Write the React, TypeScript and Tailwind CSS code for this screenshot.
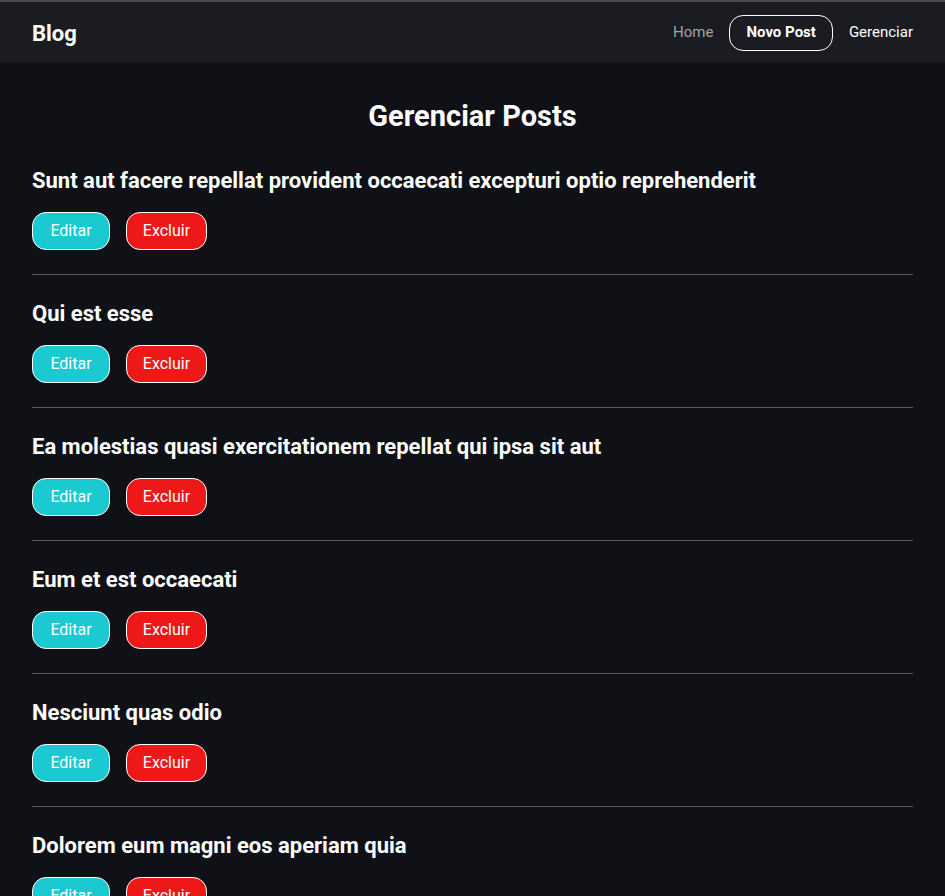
import React from "react";

const posts = [
  "Sunt aut facere repellat provident occaecati excepturi optio reprehenderit",
  "Qui est esse",
  "Ea molestias quasi exercitationem repellat qui ipsa sit aut",
  "Eum et est occaecati",
  "Nesciunt quas odio",
  "Dolorem eum magni eos aperiam quia",
  "Magnam facilis autem",
];

const Header = () => (
  <header className="bg-[#1b1c21] border-t-2 border-[#4b4b4f] h-[63px] flex items-center justify-between px-8">
    <h1 className="text-[22px] font-bold text-white pt-[2px]">Blog</h1>
    <nav className="flex items-center gap-4 text-[15px]">
      <a className="text-[#a3a3a3]">Home</a>
      <a className="text-white font-bold border border-white rounded-[14px] h-[36px] px-4 flex items-center">
        Novo Post
      </a>
      <a className="text-white">Gerenciar</a>
    </nav>
  </header>
);

const PostRow = ({ title }: { title: string }) => (
  <li className="border-b border-[#5a5b5f] pt-[24px] pb-[24px]">
    <h3 className="text-[22px] font-bold text-white leading-[30px]">{title}</h3>
    <div className="flex gap-4 mt-[16px]">
      <button className="bg-[#1bc9d0] text-white border border-white rounded-[14px] h-[38px] w-[78px] text-[16px]">
        Editar
      </button>
      <button className="bg-[#ee1818] text-white border border-white rounded-[14px] h-[38px] w-[81px] text-[16px]">
        Excluir
      </button>
    </div>
  </li>
);

export default function App() {
  return (
    <div
      className="min-h-screen bg-[#0f1117] text-white"
      style={{ fontFamily: "Roboto, 'Noto Sans', sans-serif" }}
    >
      <Header />
      <main className="px-8 pt-[35px]">
        <h2 className="text-center text-[29px] font-bold leading-[36px]">Gerenciar Posts</h2>
        <ul className="mt-[8px]">
          {posts.map((p) => (
            <PostRow key={p} title={p} />
          ))}
        </ul>
      </main>
    </div>
  );
}
